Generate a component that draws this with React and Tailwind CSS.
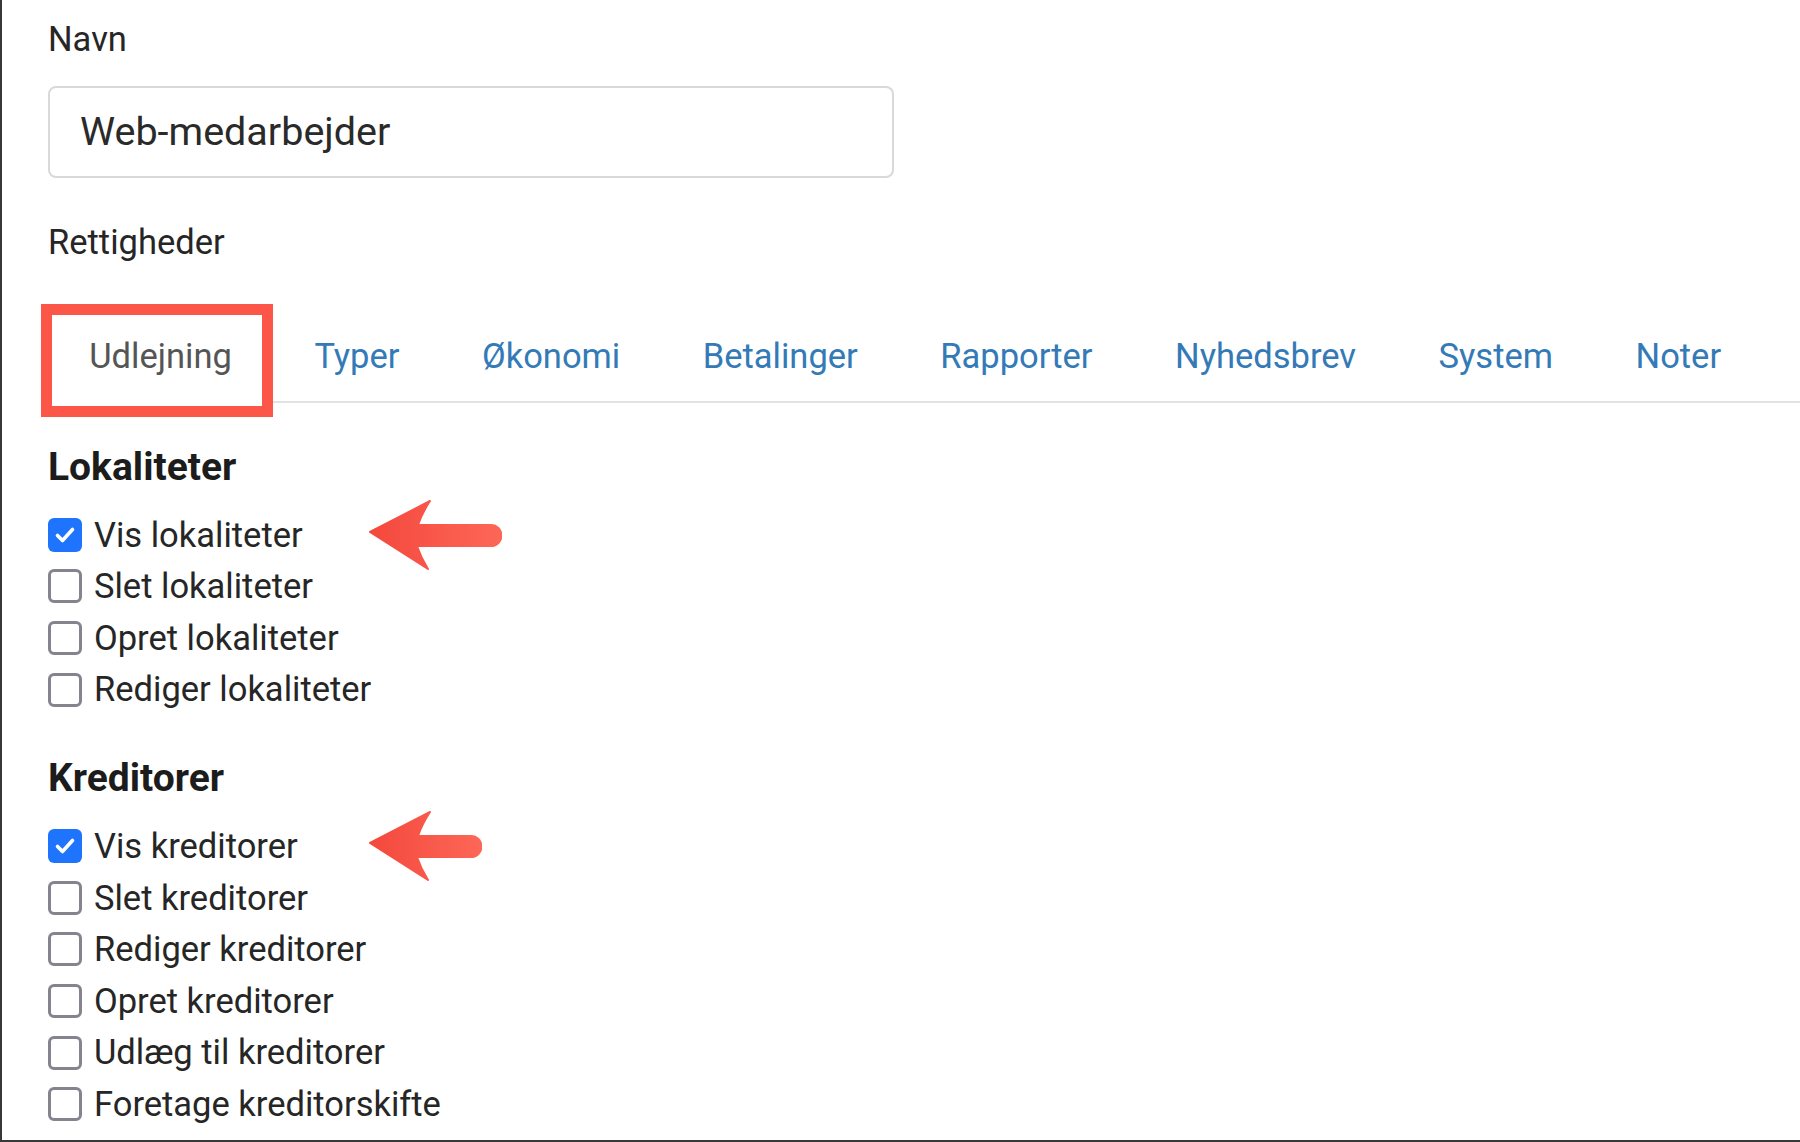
const tabs = ["Udlejning", "Typer", "Økonomi", "Betalinger", "Rapporter", "Nyhedsbrev", "System", "Noter"];

const sections = [
    {
        title: "Lokaliteter",
        items: [
            { label: "Vis lokaliteter", checked: true, arrow: 134 },
            { label: "Slet lokaliteter" },
            { label: "Opret lokaliteter" },
            { label: "Rediger lokaliteter" },
        ],
    },
    {
        title: "Kreditorer",
        items: [
            { label: "Vis kreditorer", checked: true, arrow: 114 },
            { label: "Slet kreditorer" },
            { label: "Rediger kreditorer" },
            { label: "Opret kreditorer" },
            { label: "Udlæg til kreditorer" },
            { label: "Foretage kreditorskifte" },
        ],
    },
];

function Arrow({ width }) {
    const e = width - 11;
    return (
        <svg width={width} height="72" viewBox={`0 0 ${width} 72`} className="absolute left-[320px] top-1/2 -translate-y-1/2">
            <defs>
                <linearGradient id={`ar${width}`} x1="0" y1="0" x2="1" y2="0">
                    <stop offset="0" stopColor="#f4483d" />
                    <stop offset="1" stopColor="#fd6757" />
                </linearGradient>
            </defs>
            <path
                d={`M2 33 L62 2 Q54 14 50 26 L${e} 26 A10.5 10.5 0 0 1 ${e} 47 L49 47 Q53 59 60 70 Z`}
                fill={`url(#ar${width})`}
                stroke={`url(#ar${width})`}
                strokeWidth="2"
                strokeLinejoin="round"
            />
        </svg>
    );
}

function Box({ checked }) {
    if (checked) {
        return (
            <span className="w-[34px] h-[34px] rounded-[6px] bg-[#1f74fd] flex items-center justify-center shrink-0">
                <svg width="24" height="24" viewBox="0 0 24 24">
                    <path d="M4.5 12.5l5 5L19.5 6.5" stroke="white" strokeWidth="3.6" fill="none" strokeLinecap="round" strokeLinejoin="round" />
                </svg>
            </span>
        );
    }
    return <span className="w-[34px] h-[34px] rounded-[6px] border-[3.5px] border-[#85848e] bg-white shrink-0" />;
}

export default function App() {
    return (
        <div className="w-[1800px] h-[1142px] overflow-hidden bg-white border-l-2 border-b-2 border-[#383838] font-['Roboto','Liberation_Sans',sans-serif] text-[#262626]">
            <div className="pl-[46px] pt-[18px]">
                <div className="text-[34.5px] leading-[42px]">Navn</div>

                <div className="mt-[26px] w-[846px] h-[92px] border-2 border-[#d8d9db] rounded-[8px] flex items-center pl-[30px] text-[39.5px] text-[#2a2a2a]">
                    Web-medarbejder
                </div>

                <div className="mt-[43px] text-[34.5px] leading-[42px]">Rettigheder</div>

                <div className="mt-[49px] flex">
                    {tabs.map((t, i) => (
                        <div
                            key={t}
                            className={
                                i === 0
                                    ? "relative h-[91px] pb-[2px] px-[41.25px] flex items-center text-[34.5px] text-[#555555]"
                                    : "h-[91px] px-[41.25px] flex items-center border-b-2 border-[#e0e3e6] text-[34.5px] text-[#337ab7]"
                            }
                        >
                            {t}
                            {i === 0 && (
                                <span className="absolute -left-[7px] -top-[8px] w-[232px] h-[113px] border-[11px] border-[#fb5647]" />
                            )}
                        </div>
                    ))}
                    <div className="flex-1 border-b-2 border-[#e0e3e6]" />
                </div>

                {sections.map((s, si) => (
                    <div key={s.title} className={si === 0 ? "mt-[41px]" : "mt-[40px]"}>
                        <h4 className="text-[39px] leading-[46px] font-bold text-[#1c1c1c]">{s.title}</h4>
                        <div className="mt-[19px]">
                            {s.items.map((it) => (
                                <div key={it.label} className="relative flex items-center gap-[12px] h-[51.6px] text-[34.5px] leading-none">
                                    <Box checked={it.checked} />
                                    <span>{it.label}</span>
                                    {it.arrow && <Arrow width={it.arrow} />}
                                </div>
                            ))}
                        </div>
                    </div>
                ))}
            </div>
        </div>
    );
}
